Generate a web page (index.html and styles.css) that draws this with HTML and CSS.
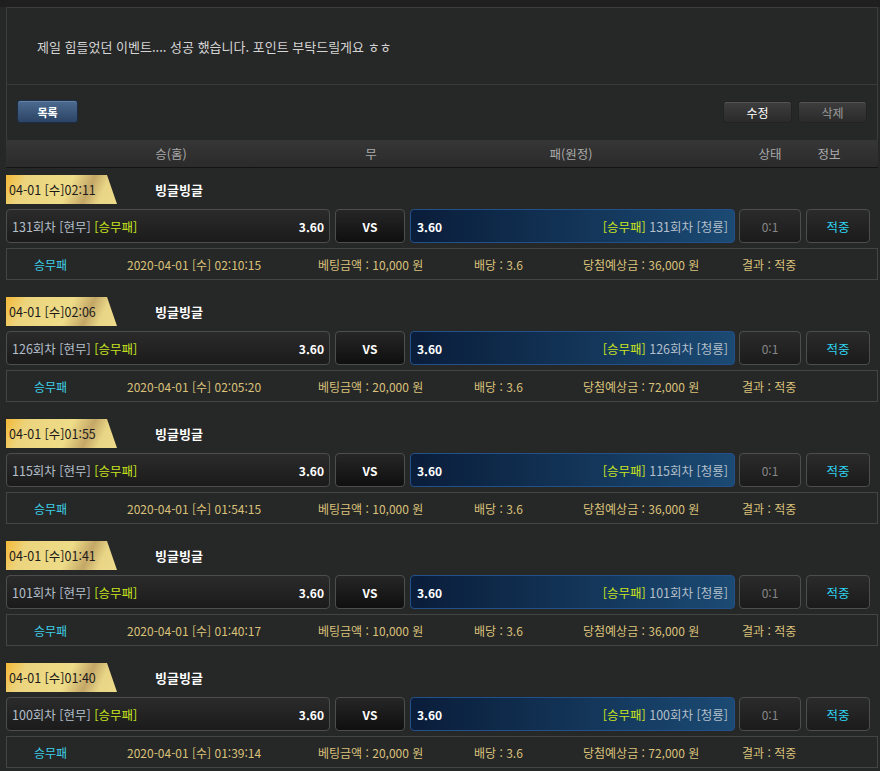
FILE: index.html
```html
<!DOCTYPE html>
<html lang="ko">
<head>
    <meta charset="UTF-8">
    <title>베팅 후기</title>
    <link rel="stylesheet" href="styles.css">
</head>
<body>
    <div class="topbar"></div>
    <div class="wrap">
        <div class="view">
            <div class="view-body">제일 힘들었던 이벤트.... 성공 했습니다. 포인트 부탁드릴게요 ㅎㅎ</div>
            <div class="view-btns">
                <button class="btn-list">목록</button>
                <div class="btn-group">
                    <button class="btn-dark">수정</button>
                    <button class="btn-dark off">삭제</button>
                </div>
            </div>
        </div>

        <div class="list-head">
            <span class="h-home">승(홈)</span>
            <span class="h-draw">무</span>
            <span class="h-away">패(원정)</span>
            <span class="h-state">상태</span>
            <span class="h-info">정보</span>
        </div>

        <div class="games">
            <div class="game">
                <div class="game-top"><span class="badge">04-01 [수]02:11</span><span class="league">빙글빙글</span></div>
                <div class="game-row">
                    <div class="box home"><span class="team">131회차 [현무] <em>[승무패]</em></span><b>3.60</b></div>
                    <div class="box vs">VS</div>
                    <div class="box away"><b>3.60</b><span class="team"><em>[승무패]</em> 131회차 [청룡]</span></div>
                    <div class="box state">0:1</div>
                    <div class="box info">적중</div>
                </div>
                <div class="game-detail">
                    <span class="kind">승무패</span>
                    <span>2020-04-01 [수] 02:10:15</span>
                    <span>베팅금액 : 10,000 원</span>
                    <span>배당 : 3.6</span>
                    <span>당첨예상금 : 36,000 원</span>
                    <span>결과 : 적중</span>
                </div>
            </div>

            <div class="game">
                <div class="game-top"><span class="badge">04-01 [수]02:06</span><span class="league">빙글빙글</span></div>
                <div class="game-row">
                    <div class="box home"><span class="team">126회차 [현무] <em>[승무패]</em></span><b>3.60</b></div>
                    <div class="box vs">VS</div>
                    <div class="box away"><b>3.60</b><span class="team"><em>[승무패]</em> 126회차 [청룡]</span></div>
                    <div class="box state">0:1</div>
                    <div class="box info">적중</div>
                </div>
                <div class="game-detail">
                    <span class="kind">승무패</span>
                    <span>2020-04-01 [수] 02:05:20</span>
                    <span>베팅금액 : 20,000 원</span>
                    <span>배당 : 3.6</span>
                    <span>당첨예상금 : 72,000 원</span>
                    <span>결과 : 적중</span>
                </div>
            </div>

            <div class="game">
                <div class="game-top"><span class="badge">04-01 [수]01:55</span><span class="league">빙글빙글</span></div>
                <div class="game-row">
                    <div class="box home"><span class="team">115회차 [현무] <em>[승무패]</em></span><b>3.60</b></div>
                    <div class="box vs">VS</div>
                    <div class="box away"><b>3.60</b><span class="team"><em>[승무패]</em> 115회차 [청룡]</span></div>
                    <div class="box state">0:1</div>
                    <div class="box info">적중</div>
                </div>
                <div class="game-detail">
                    <span class="kind">승무패</span>
                    <span>2020-04-01 [수] 01:54:15</span>
                    <span>베팅금액 : 10,000 원</span>
                    <span>배당 : 3.6</span>
                    <span>당첨예상금 : 36,000 원</span>
                    <span>결과 : 적중</span>
                </div>
            </div>

            <div class="game">
                <div class="game-top"><span class="badge">04-01 [수]01:41</span><span class="league">빙글빙글</span></div>
                <div class="game-row">
                    <div class="box home"><span class="team">101회차 [현무] <em>[승무패]</em></span><b>3.60</b></div>
                    <div class="box vs">VS</div>
                    <div class="box away"><b>3.60</b><span class="team"><em>[승무패]</em> 101회차 [청룡]</span></div>
                    <div class="box state">0:1</div>
                    <div class="box info">적중</div>
                </div>
                <div class="game-detail">
                    <span class="kind">승무패</span>
                    <span>2020-04-01 [수] 01:40:17</span>
                    <span>베팅금액 : 10,000 원</span>
                    <span>배당 : 3.6</span>
                    <span>당첨예상금 : 36,000 원</span>
                    <span>결과 : 적중</span>
                </div>
            </div>

            <div class="game">
                <div class="game-top"><span class="badge">04-01 [수]01:40</span><span class="league">빙글빙글</span></div>
                <div class="game-row">
                    <div class="box home"><span class="team">100회차 [현무] <em>[승무패]</em></span><b>3.60</b></div>
                    <div class="box vs">VS</div>
                    <div class="box away"><b>3.60</b><span class="team"><em>[승무패]</em> 100회차 [청룡]</span></div>
                    <div class="box state">0:1</div>
                    <div class="box info">적중</div>
                </div>
                <div class="game-detail">
                    <span class="kind">승무패</span>
                    <span>2020-04-01 [수] 01:39:14</span>
                    <span>베팅금액 : 20,000 원</span>
                    <span>배당 : 3.6</span>
                    <span>당첨예상금 : 72,000 원</span>
                    <span>결과 : 적중</span>
                </div>
            </div>
        </div>
    </div>
</body>
</html>
```

FILE: styles.css
```css
body {
    margin: 0;
    background: #262727;
    color: #ccc;
    font-family: "Noto Sans CJK KR", "Noto Sans", sans-serif;
    font-size: 12px;
}
.topbar {
    height: 7px;
    background: #1f1f1f;
}
.wrap {
    margin: 0 2px 0 6px;
}
.view {
    border: 1px solid #3c3c3c;
    border-bottom: none;
}
.view-body {
    height: 76px;
    display: flex;
    align-items: center;
    padding-left: 30px;
    color: #d4d4d4;
    font-size: 13px;
    border-bottom: 1px solid #3a3a3a;
}
.view-btns {
    box-sizing: border-box;
    height: 55px;
    display: flex;
    align-items: flex-start;
    justify-content: space-between;
    padding: 15px 10px 0;
}
.btn-group {
    display: flex;
    gap: 6px;
    padding-top: 1px;
}
button {
    font-family: inherit;
    font-size: 11px;
    height: 23px;
    border-radius: 3px;
    cursor: pointer;
    padding: 0;
}
.btn-list {
    width: 61px;
    color: #fff;
    font-weight: bold;
    background: linear-gradient(#4c6b90, #2c4465);
    border: 1px solid #1c2c44;
    box-shadow: inset 0 1px 0 #6482a6;
}
.btn-dark {
    width: 69px;
    height: 22px;
    color: #fff;
    font-size: 12px;
    background: linear-gradient(#3e3e3e, #2a2a2a);
    border: 1px solid #222;
    box-shadow: inset 0 1px 0 #555;
}
.btn-dark.off {
    color: #9a9a9a;
}
.list-head {
    height: 27px;
    display: flex;
    align-items: center;
    color: #aaa;
    font-size: 12.5px;
    background: linear-gradient(#363636, #2b2b2b);
    border-bottom: 1px solid #141414;
}
.list-head span {
    text-align: center;
}
.h-home { width: 330px; }
.h-draw { width: 70px; }
.h-away { width: 330px; }
.h-state { width: 68px; }
.h-info { width: 50px; }
.games {
    padding-top: 7px;
}
.game {
    margin-bottom: 17px;
}
.game-top {
    height: 29px;
    display: flex;
    align-items: center;
}
.badge {
    width: 108px;
    height: 29px;
    line-height: 29px;
    padding-left: 3px;
    color: #1b1b1b;
    font-size: 12.5px;
    background: linear-gradient(115deg, #f4b938 0%, #ecd47e 18%, #eedc88 55%, #c4a766 72%, #e8d586 84%, #eddb8a 100%);
    clip-path: polygon(0 0, 101px 0, 111px 100%, 0 100%);
}
.league {
    margin-left: 38px;
    color: #fff;
    font-size: 13px;
    font-weight: bold;
}
.game-row {
    display: flex;
    margin-top: 5px;
    height: 34px;
}
.box {
    box-sizing: border-box;
    height: 34px;
    border: 1px solid #4d4d4d;
    border-radius: 4px;
    background: linear-gradient(#2b2b2b, #1b1b1b);
    display: flex;
    align-items: center;
}
.box b {
    color: #fff;
    font-weight: bold;
}
.team {
    color: #b3bfca;
    font-size: 12.5px;
}
.team em {
    font-style: normal;
    color: #c6e21e;
}
.home {
    width: 324px;
    justify-content: space-between;
    padding: 0 5px;
}
.vs {
    width: 70px;
    margin-left: 5px;
    justify-content: center;
    color: #fff;
    font-weight: bold;
    background: linear-gradient(#262626, #0f0f0f);
}
.away {
    width: 325px;
    margin-left: 5px;
    justify-content: space-between;
    padding: 0 6px;
    border-color: #24508a;
    background: linear-gradient(90deg, #0a1d3a, #1b4a73);
}
.state {
    width: 62px;
    margin-left: 4px;
    justify-content: center;
    color: #868686;
}
.info {
    width: 64px;
    margin-left: 5px;
    justify-content: center;
    color: #2dd3f0;
    font-size: 12.5px;
}
.game-detail {
    box-sizing: border-box;
    height: 32px;
    margin-top: 5px;
    border: 1px solid #444;
    display: grid;
    grid-template-columns: 93px 191px 156px 109px 159px 1fr;
    align-items: center;
    padding-left: 27px;
    color: #d9c17a;
}
.game-detail .kind {
    color: #3dcfe6;
}
```
